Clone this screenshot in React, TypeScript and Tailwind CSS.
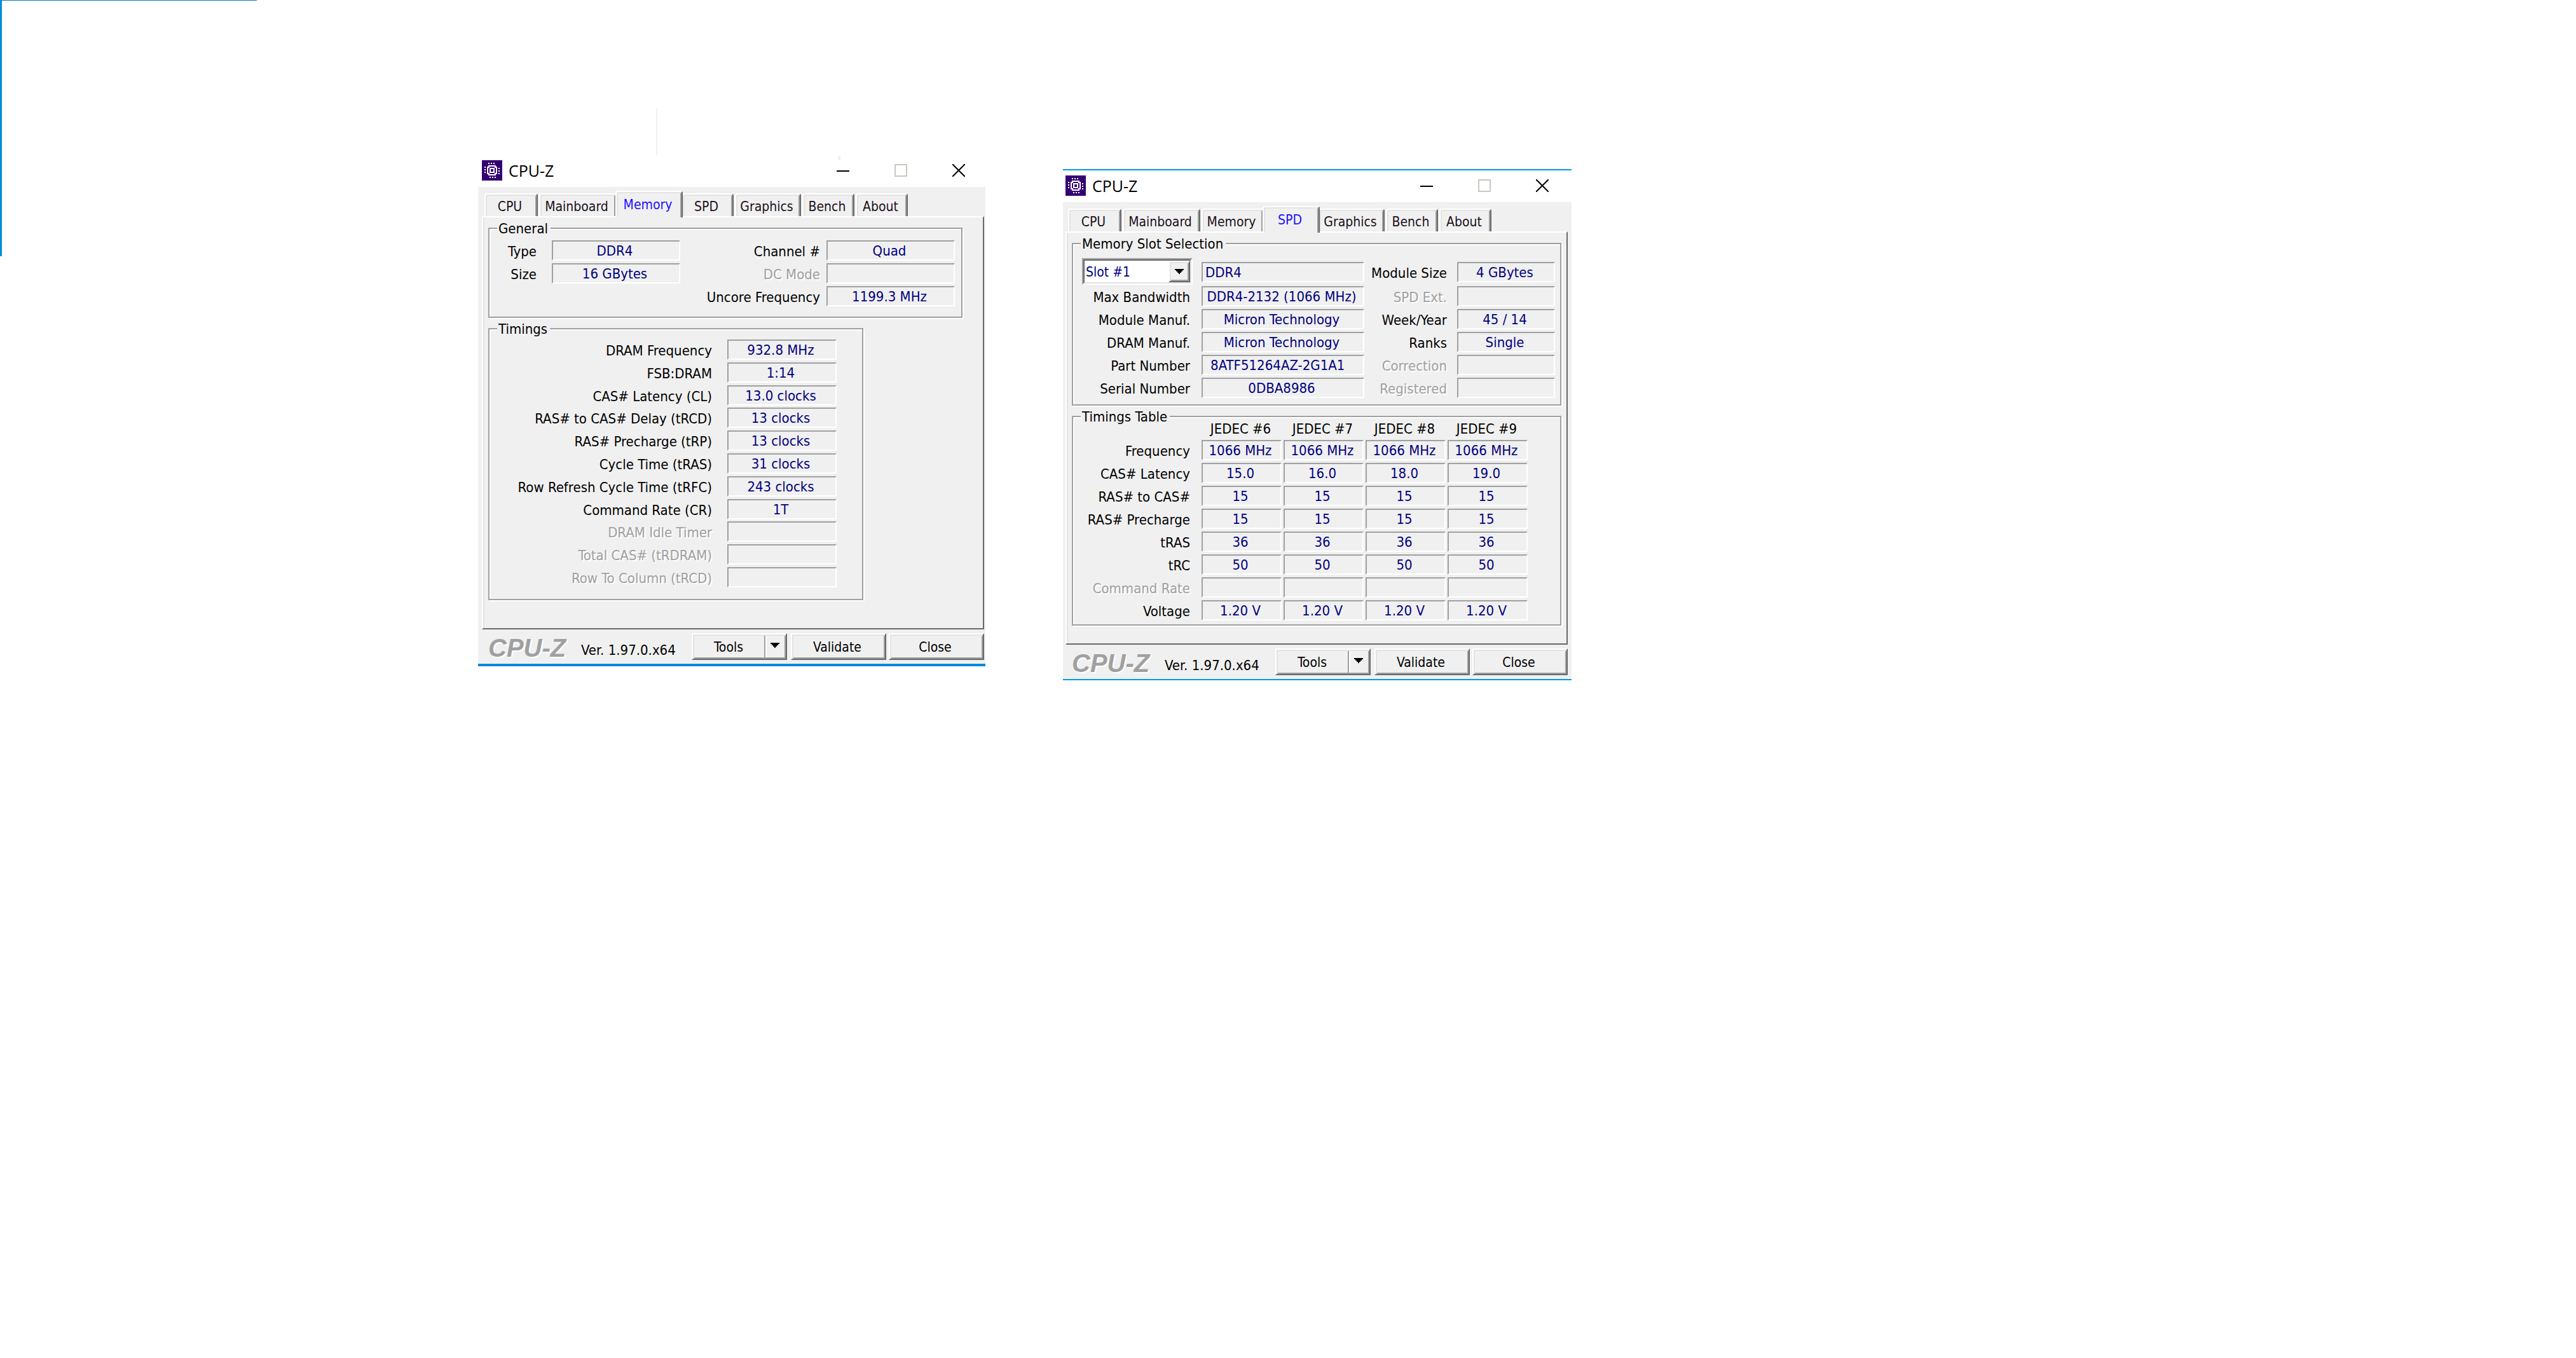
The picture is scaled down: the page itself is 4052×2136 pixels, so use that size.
import { ReactNode } from "react";
import clsx from "clsx";

type FieldRow = { label: string; value?: string; disabled?: boolean };

const TABS = [
  { name: "CPU", width: "w-[84px]", activeWidth: "w-[92px]" },
  { name: "Mainboard", width: "w-[122px]", activeWidth: "w-[130px]" },
  { name: "Memory", width: "w-[98px]", activeWidth: "w-[106px]" },
  { name: "SPD", width: "w-[82px]", activeWidth: "w-[90px]" },
  { name: "Graphics", width: "w-[104px]", activeWidth: "w-[112px]" },
  { name: "Bench", width: "w-[82px]", activeWidth: "w-[90px]" },
  { name: "About", width: "w-[82px]", activeWidth: "w-[90px]" },
];

const TIMINGS: FieldRow[] = [
  { label: "DRAM Frequency", value: "932.8 MHz" },
  { label: "FSB:DRAM", value: "1:14" },
  { label: "CAS# Latency (CL)", value: "13.0 clocks" },
  { label: "RAS# to CAS# Delay (tRCD)", value: "13 clocks" },
  { label: "RAS# Precharge (tRP)", value: "13 clocks" },
  { label: "Cycle Time (tRAS)", value: "31 clocks" },
  { label: "Row Refresh Cycle Time (tRFC)", value: "243 clocks" },
  { label: "Command Rate (CR)", value: "1T" },
  { label: "DRAM Idle Timer", disabled: true },
  { label: "Total CAS# (tRDRAM)", disabled: true },
  { label: "Row To Column (tRCD)", disabled: true },
];

const SLOT_LEFT: FieldRow[] = [
  { label: "Max Bandwidth", value: "DDR4-2132 (1066 MHz)" },
  { label: "Module Manuf.", value: "Micron Technology" },
  { label: "DRAM Manuf.", value: "Micron Technology" },
  // part numbers come space padded from the SPD
  { label: "Part Number", value: "8ATF51264AZ-2G1A1  " },
  { label: "Serial Number", value: "0DBA8986" },
];

const SLOT_RIGHT: FieldRow[] = [
  { label: "SPD Ext.", disabled: true },
  { label: "Week/Year", value: "45 / 14" },
  { label: "Ranks", value: "Single" },
  { label: "Correction", disabled: true },
  { label: "Registered", disabled: true },
];

const JEDEC = ["JEDEC #6", "JEDEC #7", "JEDEC #8", "JEDEC #9"];

const JEDEC_ROWS: { label: string; values: string[]; disabled?: boolean }[] = [
  { label: "Frequency", values: ["1066 MHz", "1066 MHz", "1066 MHz", "1066 MHz"] },
  { label: "CAS# Latency", values: ["15.0", "16.0", "18.0", "19.0"] },
  { label: "RAS# to CAS#", values: ["15", "15", "15", "15"] },
  { label: "RAS# Precharge", values: ["15", "15", "15", "15"] },
  { label: "tRAS", values: ["36", "36", "36", "36"] },
  { label: "tRC", values: ["50", "50", "50", "50"] },
  { label: "Command Rate", values: ["", "", "", ""], disabled: true },
  { label: "Voltage", values: ["1.20 V", "1.20 V", "1.20 V", "1.20 V"] },
];

const disabledText = "text-[#a0a0a0] [text-shadow:2px_2px_0_#fff]";
const raised =
  "border-2 border-t-white border-l-white border-r-[#696969] border-b-[#696969] shadow-[inset_2px_2px_0_#e3e3e3,inset_-2px_-2px_0_#a0a0a0]";
const sunken =
  "h-8 border-2 border-t-[#a0a0a0] border-r-white border-b-white border-l-[#a0a0a0] leading-[30px] whitespace-pre text-[#000080]";

function ChipIcon() {
  return (
    <svg width="32" height="32" viewBox="0 0 16 16" shapeRendering="crispEdges" aria-hidden="true">
      <rect width="16" height="16" fill="#330072" />
      <path
        fill="#fff"
        d="M5 2h1v1h-1zM7 2h1v1h-1zM9 2h1v1h-1zM6 13h1v1h-1zM8 13h1v1h-1zM10 13h1v1h-1zM2 5h1v1h-1zM2 7h1v1h-1zM2 9h1v1h-1zM13 6h1v1h-1zM13 8h1v1h-1zM13 10h1v1h-1z"
      />
      <path
        fill="#fff"
        d="M5 4h6v1h-6zM5 11h6v1h-6zM4 5h1v6h-1zM11 5h1v6h-1zM5 5h1v1h-1zM10 5h1v1h-1zM5 10h1v1h-1zM10 10h1v1h-1zM6 6h4v1h-4zM6 9h4v1h-4zM6 7h1v2h-1zM9 7h1v2h-1z"
      />
    </svg>
  );
}

function Arrow() {
  return (
    <svg width="14" height="8" viewBox="0 0 7 4" shapeRendering="crispEdges" aria-hidden="true">
      <path d="M0 0h7v1h-1v1h-1v1h-1v1h-1v-1h-1v-1h-1v-1h-1z" />
    </svg>
  );
}

function TitleBar() {
  return (
    <header className="flex h-[50px] items-start pt-2">
      <ChipIcon />
      <h1 className="ml-[10px] grow font-['Open_Sans',sans-serif] text-[25px] leading-8">CPU-Z</h1>
      <div className="flex gap-[11px]">
        <button type="button" aria-label="Minimize" className="flex h-8 w-20 items-center justify-center">
          <svg width="20" height="20" viewBox="0 0 10 10" shapeRendering="crispEdges">
            <path d="M0 5h10v1h-10z" />
          </svg>
        </button>
        <button type="button" disabled aria-label="Maximize" className="flex h-8 w-20 items-center justify-center">
          <svg width="20" height="20" viewBox="0 0 10 10" shapeRendering="crispEdges">
            <path fill="none" stroke="#cac7c0" d="M.5 .5h9v9h-9z" />
          </svg>
        </button>
        <button type="button" aria-label="Close window" className="flex h-8 w-20 items-center justify-center">
          <svg width="20" height="20" viewBox="0 0 10 10">
            <path stroke="#000" d="M0 0l10 10M10 0l-10 10" />
          </svg>
        </button>
      </div>
    </header>
  );
}

function Tabs({ active }: { active: string }) {
  return (
    <nav role="tablist" className="flex h-[46px] items-end gap-[2px] pl-1 text-[21px]">
      {TABS.map((t) => {
        const on = t.name === active;
        return (
          <button
            key={t.name}
            type="button"
            role="tab"
            aria-selected={on}
            className={clsx(
              "shrink-0 rounded-t-[4px] border-2 border-b-0 border-t-white border-r-[#696969] border-l-white bg-[#f0f0f0] pr-1 text-center shadow-[inset_2px_2px_0_#e3e3e3,inset_-2px_0_0_#a0a0a0]",
              on ? "relative z-10 -mx-1 -mb-[2px] h-[42px] text-[#2010ff]" : "h-9 pt-1 text-[#201020]",
              on ? t.activeWidth : t.width,
            )}
          >
            {t.name}
          </button>
        );
      })}
    </nav>
  );
}

function Group({ title, className, children }: { title: string; className?: string; children: ReactNode }) {
  return (
    <section
      className={clsx(
        "relative border-2 border-[#a0a0a0] px-[14px] shadow-[2px_2px_0_#fff,inset_2px_2px_0_#fff]",
        className,
      )}
    >
      <h2 className="absolute -top-3 left-3 bg-[#f0f0f0] pr-1 pl-[2px] leading-6">{title}</h2>
      {children}
    </section>
  );
}

function Row({ row, gap, valueWidth }: { row: FieldRow; gap: string; valueWidth: string }) {
  return (
    <div className={clsx("flex items-center justify-end", gap)}>
      <dt className={clsx("pt-1 leading-7 whitespace-nowrap", row.disabled && disabledText)}>{row.label}</dt>
      <dd className={clsx("shrink-0 pr-1 text-center", sunken, valueWidth)}>{row.value}</dd>
    </div>
  );
}

function Footer() {
  return (
    <footer className="flex items-center py-[6px]">
      <p className="w-[156px] pt-1 pl-[10px] font-['Liberation_Sans',sans-serif] text-[40px] leading-[38px] font-bold whitespace-nowrap text-[#a0a0a0] italic [text-shadow:2px_2px_0_#fff]">
        CPU-Z
      </p>
      <p className="grow pt-3 leading-6 whitespace-nowrap">Ver. 1.97.0.x64</p>
      <div className={clsx("mr-[6px] flex h-[42px] w-[150px] text-[21px]", raised)}>
        <button type="button" className="grow pt-[2px]">
          Tools
        </button>
        <button
          type="button"
          aria-label="Tools menu"
          className="my-[2px] flex w-[34px] items-center justify-center border-l-2 border-[#a0a0a0] pr-[2px] pb-1 shadow-[inset_2px_0_0_#fff]"
        >
          <Arrow />
        </button>
      </div>
      <button type="button" className={clsx("mr-1 h-[42px] w-[150px] pt-[2px] pr-1 text-[21px]", raised)}>
        Validate
      </button>
      <button type="button" className={clsx("h-[42px] w-[150px] pt-[2px] pr-1 text-[21px]", raised)}>
        Close
      </button>
    </footer>
  );
}

function Window({ tab, className, inset, children }: { tab: string; className: string; inset: string; children: ReactNode }) {
  return (
    <article className={clsx("absolute bg-white", className)}>
      <div className={inset}>
        <TitleBar />
      </div>
      <div className={clsx("bg-[#f0f0f0]", inset)}>
        <Tabs active={tab} />
        <div className="h-[650px] border-2 border-t-white border-r-[#696969] border-b-[#696969] border-l-white pt-4 pl-2 shadow-[inset_2px_0_0_#e3e3e3]">
          {children}
        </div>
        <Footer />
      </div>
    </article>
  );
}

function MemoryPage() {
  return (
    <>
      <Group title="General" className="mr-8 flex h-[142px] justify-between pt-[18px] pr-[10px]">
        <dl className="flex w-[286px] flex-col gap-1">
          <Row row={{ label: "Type", value: "DDR4" }} gap="gap-6" valueWidth="w-[202px]" />
          <Row row={{ label: "Size", value: "16 GBytes" }} gap="gap-6" valueWidth="w-[202px]" />
        </dl>
        <dl className="flex flex-col gap-1">
          <Row row={{ label: "Channel #", value: "Quad" }} gap="gap-[10px]" valueWidth="w-[202px]" />
          <Row row={{ label: "DC Mode", disabled: true }} gap="gap-[10px]" valueWidth="w-[202px]" />
          <Row row={{ label: "Uncore Frequency", value: "1199.3 MHz" }} gap="gap-[10px]" valueWidth="w-[202px]" />
        </dl>
      </Group>
      <Group title="Timings" className="mt-4 h-[428px] w-[590px] pt-4 pr-10">
        <dl className="flex h-[390px] flex-col justify-between">
          {TIMINGS.map((row) => (
            <Row key={row.label} row={row} gap="gap-6" valueWidth="w-[172px]" />
          ))}
        </dl>
      </Group>
    </>
  );
}

function SpdPage() {
  return (
    <>
      <Group title="Memory Slot Selection" className="mr-2 h-[256px] pt-[22px] pr-2">
        <div className="flex h-[42px] items-center">
          <div className="relative h-[42px] w-[174px] border-2 border-t-[#a0a0a0] border-r-white border-b-white border-l-[#a0a0a0]">
            <select
              aria-label="Memory slot"
              className="h-full w-full appearance-none border-2 border-t-[#696969] border-r-[#e3e3e3] border-b-[#e3e3e3] border-l-[#696969] bg-white pt-[2px] pl-[2px] text-[21px] text-[#000080]"
            >
              <option>Slot #1</option>
            </select>
            <span
              className={clsx(
                "pointer-events-none absolute top-[2px] right-[2px] flex h-[34px] w-[34px] items-center justify-center bg-[#f0f0f0]",
                raised,
              )}
            >
              <Arrow />
            </span>
          </div>
          <output className={clsx("mt-[2px] ml-[14px] w-[256px] shrink-0 pl-1", sunken)}>DDR4</output>
          <dl className="mt-[2px] grow">
            <Row row={{ label: "Module Size", value: "4 GBytes" }} gap="gap-4" valueWidth="w-[154px]" />
          </dl>
        </div>
        <div className="mt-[2px] flex justify-between">
          <dl className="flex w-[444px] flex-col gap-1">
            {SLOT_LEFT.map((row) => (
              <Row key={row.label} row={row} gap="gap-[18px]" valueWidth="w-[256px]" />
            ))}
          </dl>
          <dl className="flex flex-col gap-1">
            {SLOT_RIGHT.map((row) => (
              <Row key={row.label} row={row} gap="gap-4" valueWidth="w-[154px]" />
            ))}
          </dl>
        </div>
      </Group>
      <Group title="Timings Table" className="mt-4 mr-2 h-[330px] pt-1">
        <table className="table-fixed border-collapse">
          <thead>
            <tr className="h-[30px]">
              <td className="w-[188px]" />
              {JEDEC.map((name) => (
                <th key={name} scope="col" className="w-[129px] p-0 pr-[6px] text-center leading-[30px] font-normal">
                  {name}
                </th>
              ))}
            </tr>
          </thead>
          <tbody>
            {JEDEC_ROWS.map((row) => (
              <tr key={row.label} className="h-9">
                <th
                  scope="row"
                  className={clsx("p-0 pt-1 pr-[18px] text-right leading-7 font-normal whitespace-nowrap", row.disabled && disabledText)}
                >
                  {row.label}
                </th>
                {row.values.map((v, i) => (
                  <td key={i} className="p-0 pr-[3px]">
                    <div className={clsx("pr-1 text-center", sunken)}>{v}</div>
                  </td>
                ))}
              </tr>
            ))}
          </tbody>
        </table>
      </Group>
    </>
  );
}

export default function App() {
  return (
    <main className="relative min-h-screen bg-white font-['DejaVu_Sans_Condensed','DejaVu_Sans',sans-serif] text-[22px] leading-6 text-black">
      {/* stray window edges left on the desktop */}
      <div className="absolute top-0 left-0 h-[403px] w-[404px] border-t border-l-[3px] border-t-[#0078c8] border-l-[#008ddd]" />
      <div className="absolute top-[170px] left-[1032px] h-[76px] w-[2px] bg-[#f0f0f0]" />

      <Window tab="Memory" className="top-[244px] left-[752px] w-[798px] border-b-4 border-[#0088d8]" inset="pl-[6px] pr-[2px]">
        <MemoryPage />
      </Window>
      <div className="absolute top-[246px] left-[1318px] h-[6px] w-1 bg-[#f0f0f0]" />

      <Window tab="SPD" className="top-[266px] left-[1672px] w-[800px] border-y-2 border-[#0099e8]" inset="pl-1 pr-[6px]">
        <SpdPage />
      </Window>
    </main>
  );
}
